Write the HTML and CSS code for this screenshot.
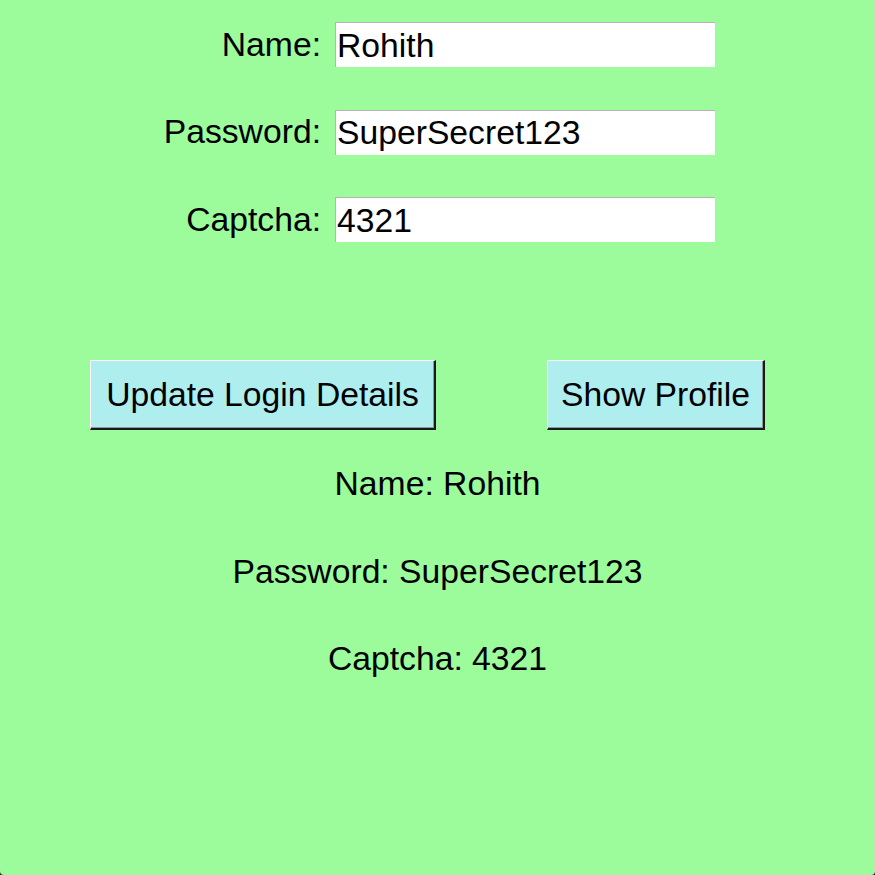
FILE: index.html
```html
<!DOCTYPE html>
<html>
<head>
<meta charset="utf-8">
<link rel="stylesheet" href="styles.css">
</head>
<body>
<div class="window">
  <div class="form">
    <label class="lbl">Name:</label>
    <input class="field" type="text" value="Rohith">
    <label class="lbl">Password:</label>
    <input class="field" type="text" value="SuperSecret123">
    <label class="lbl">Captcha:</label>
    <input class="field" type="text" value="4321">
  </div>
  <div class="actions">
    <button class="btn btn-update">Update Login Details</button>
    <button class="btn btn-show">Show Profile</button>
  </div>
  <div class="output">
    <div class="out-line">Name: Rohith</div>
    <div class="out-line">Password: SuperSecret123</div>
    <div class="out-line">Captcha: 4321</div>
  </div>
</div>
</body>
</html>
```
FILE: styles.css
```css
html {
  background: #2a2a2a;
  margin: 0;
  padding: 0;
}
body {
  margin: 0;
  padding: 0;
}
.window {
  width: 875px;
  height: 875px;
  box-sizing: border-box;
  background: #9cfb9a;
  border-radius: 0 0 4px 4px;
  font-family: "Liberation Sans", Arial, sans-serif;
  font-size: 33.7px;
  color: #000;
  padding-top: 22px;
}
.form {
  display: grid;
  grid-template-columns: 321px 380px;
  grid-auto-rows: 45px;
  column-gap: 14px;
  row-gap: 42.5px;
}
.lbl {
  justify-self: end;
  align-self: center;
  line-height: 1;
}
.field {
  width: 380px;
  height: 45px;
  box-sizing: border-box;
  margin: 0;
  padding: 0 0 0 1px;
  border: none;
  border-top: 1px solid #b4b4b4;
  border-left: 1px solid #b4b4b4;
  background: #fff;
  font-family: "Liberation Sans", Arial, sans-serif;
  font-size: 33.7px;
  color: #000;
  outline: none;
}
.actions {
  display: flex;
  margin-top: 118px;
  padding-left: 90px;
  column-gap: 111px;
}
.btn {
  height: 70px;
  box-sizing: border-box;
  margin: 0;
  background: #afeeee;
  border-style: solid;
  border-width: 1px 2px 2px 1px;
  border-color: #ffffff #1a1a1a #1a1a1a #ffffff;
  box-shadow: inset -1px -1px 0 #8a9a9a;
  font-family: "Liberation Sans", Arial, sans-serif;
  font-size: 33.7px;
  color: #000;
  padding: 0;
}
.btn-update {
  width: 346px;
}
.btn-show {
  width: 218px;
}
.output {
  margin-top: 33px;
  display: flex;
  flex-direction: column;
  align-items: center;
  row-gap: 47.5px;
}
.out-line {
  height: 40px;
  line-height: 40px;
}
```
